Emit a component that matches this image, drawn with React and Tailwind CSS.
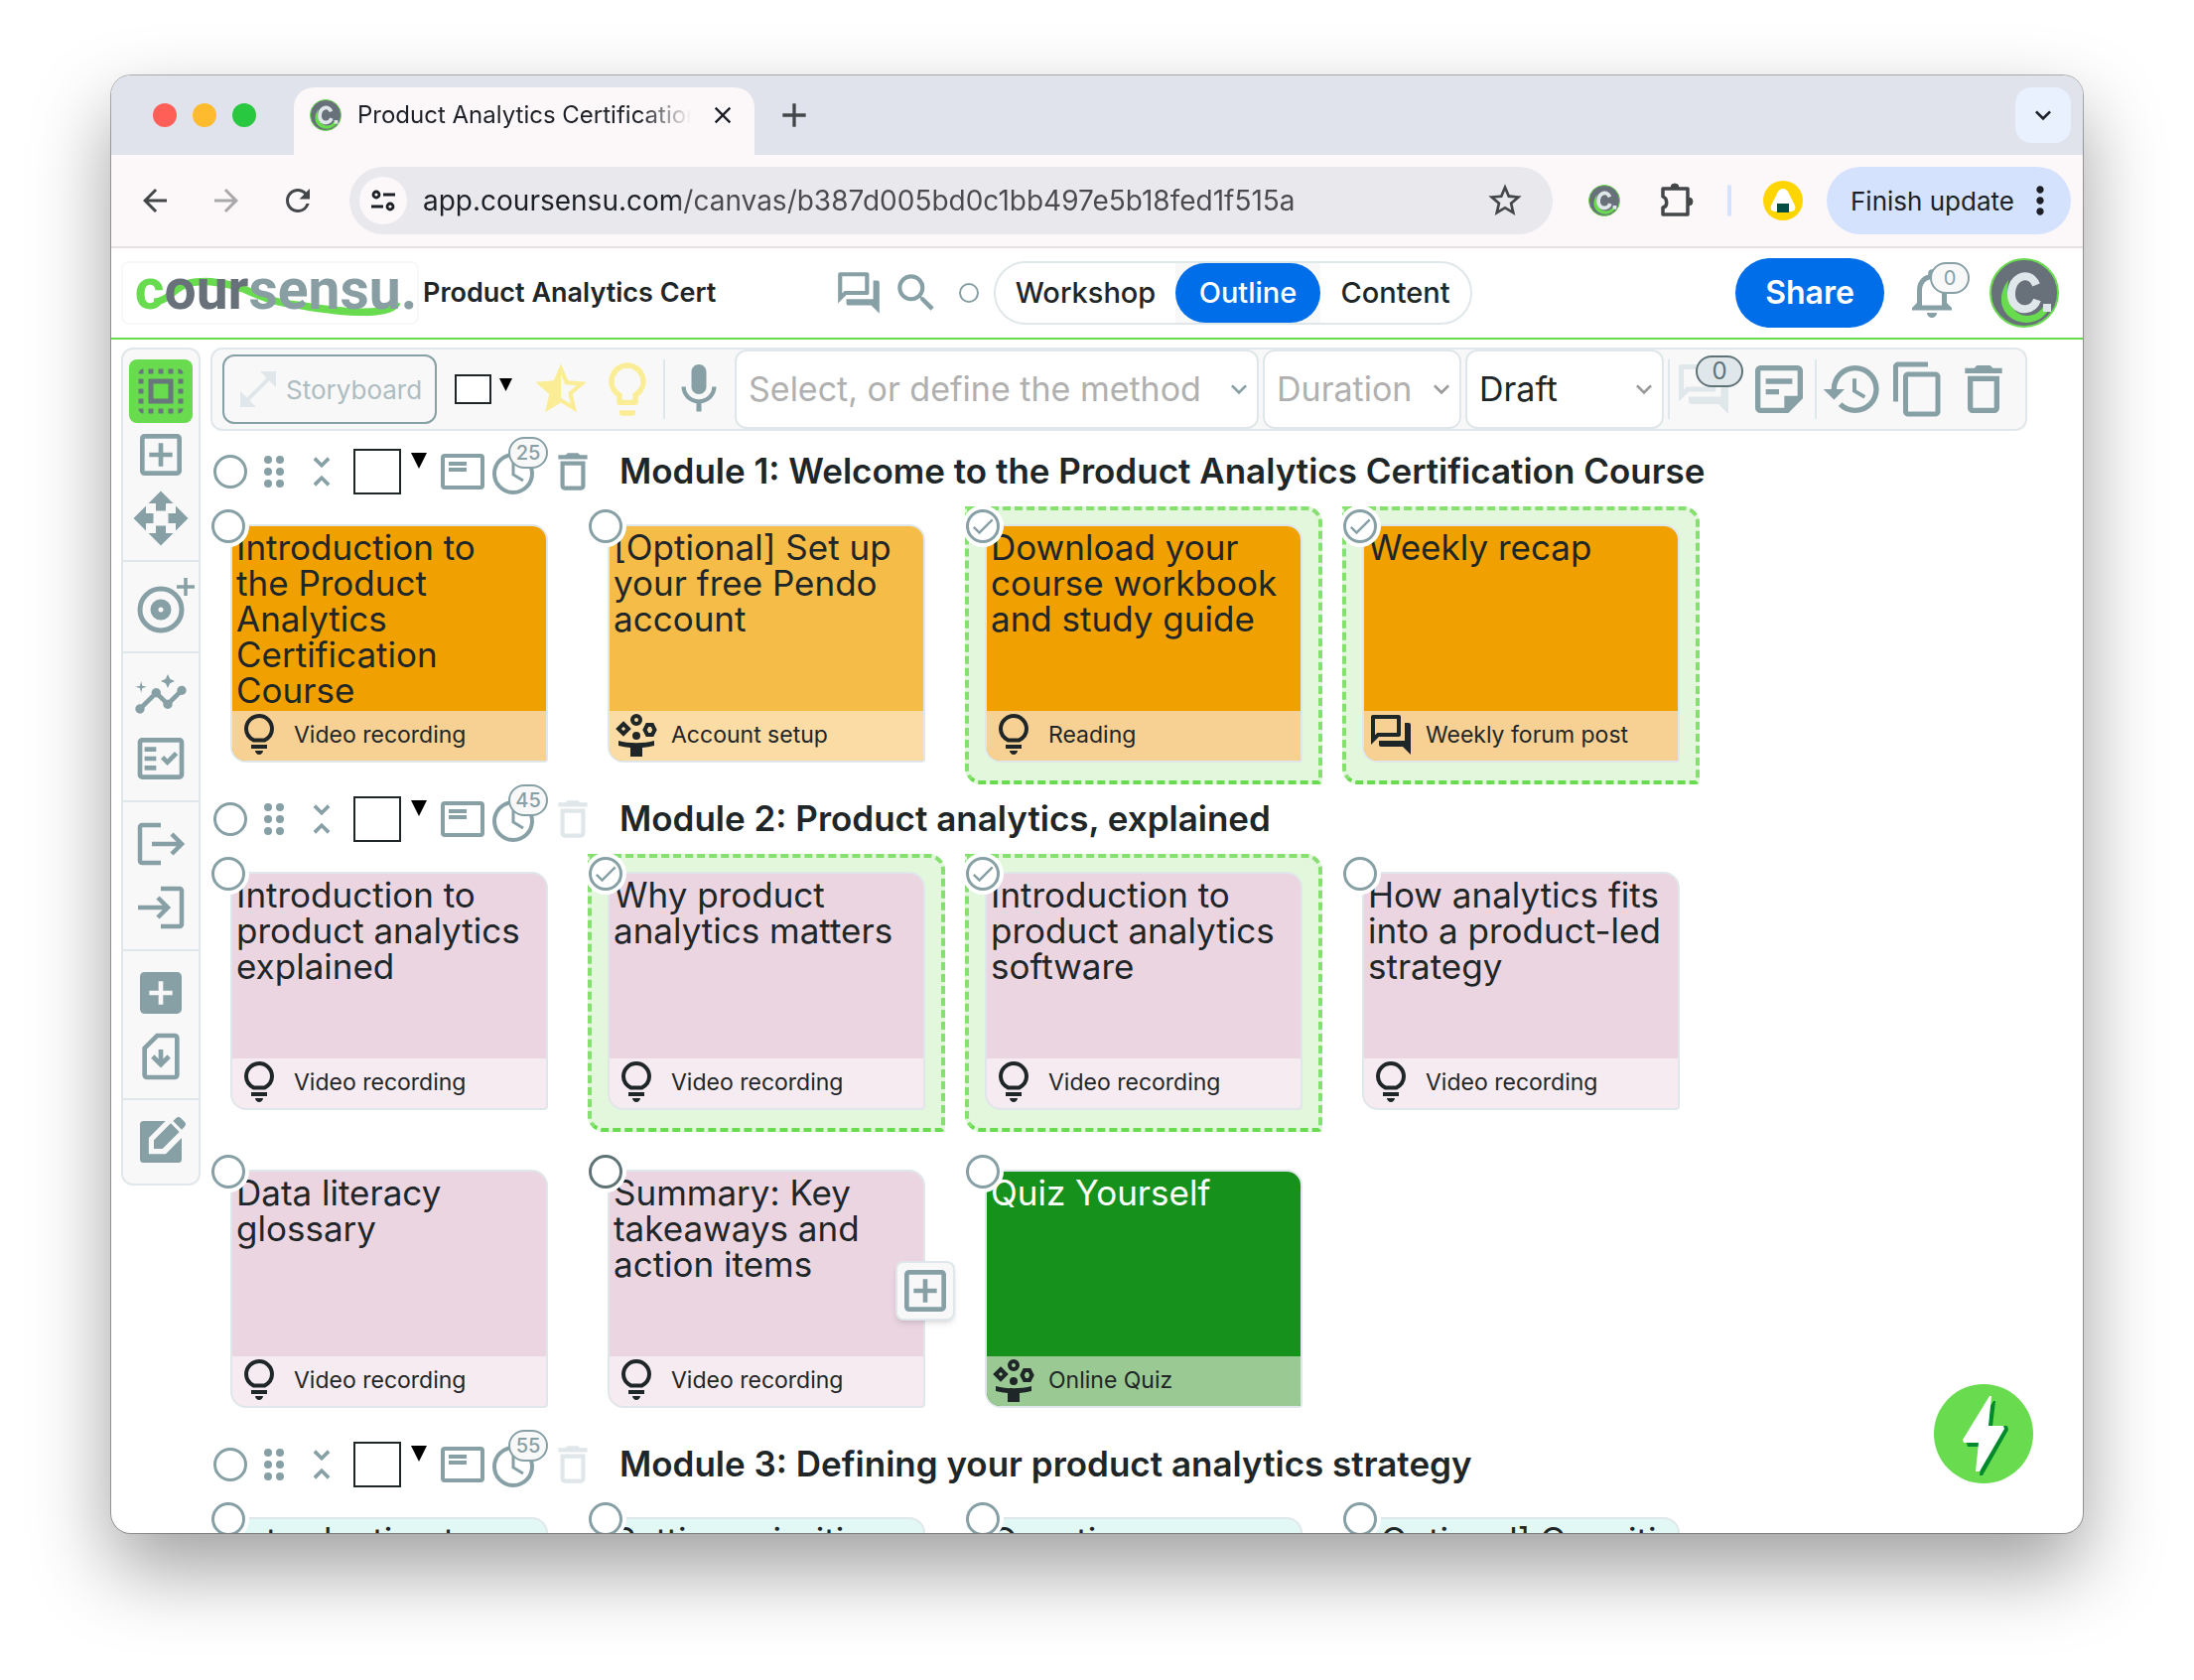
import React from 'react';
import {
    MdAddBox, MdArrowBack, MdArrowForward, MdClose, MdContentCopy, MdDeleteOutline, MdHistory,
    MdInsights, MdKeyboardArrowDown, MdLightbulbOutline, MdMic, MdMoreVert, MdOpenInFull, MdOpenWith,
    MdOutlineAddBox, MdOutlineFactCheck, MdOutlineForum, MdOutlineNotifications, MdRefresh, MdSearch,
    MdSelectAll, MdStarHalf, MdStarOutline, MdUnfoldLess, MdAdd, MdCheck,
} from 'react-icons/md';

const MODULES = [
    {
        id: 1,
        title: 'Module 1: Welcome to the Product Analytics Certification Course',
        minutes: 25,
        canDelete: true,
        cards: [
            { title: 'Introduction to the Product Analytics Certification Course', method: 'Video recording', icon: 'bulb', tone: 'orange' },
            { title: '[Optional] Set up your free Pendo account', method: 'Account setup', icon: 'juggle', tone: 'amber' },
            { title: 'Download your course workbook and study guide', method: 'Reading', icon: 'bulb', tone: 'orange', selected: true },
            { title: 'Weekly recap', method: 'Weekly forum post', icon: 'forum', tone: 'orange', selected: true },
        ],
    },
    {
        id: 2,
        title: 'Module 2: Product analytics, explained',
        minutes: 45,
        cards: [
            { title: 'Introduction to product analytics explained', method: 'Video recording', icon: 'bulb', tone: 'pink' },
            { title: 'Why product analytics matters', method: 'Video recording', icon: 'bulb', tone: 'pink', selected: true },
            { title: 'Introduction to product analytics software', method: 'Video recording', icon: 'bulb', tone: 'pink', selected: true },
            { title: 'How analytics fits into a product-led strategy', method: 'Video recording', icon: 'bulb', tone: 'pink' },
            { title: 'Data literacy glossary', method: 'Video recording', icon: 'bulb', tone: 'pink' },
            { title: 'Summary: Key takeaways and action items', method: 'Video recording', icon: 'bulb', tone: 'pink', active: true },
            { title: 'Quiz Yourself', method: 'Online Quiz', icon: 'juggle', tone: 'green' },
        ],
    },
    {
        id: 3,
        title: 'Module 3: Defining your product analytics strategy',
        minutes: 55,
        cards: [
            { title: 'Introduction to defining strategy', method: 'Video recording', icon: 'bulb', tone: 'mint' },
            { title: 'Setting priorities', method: 'Video recording', icon: 'bulb', tone: 'mint' },
            { title: 'Questions', method: 'Video recording', icon: 'bulb', tone: 'mint' },
            { title: '[Optional] Cogniti\u200bve', method: 'Reading', icon: 'bulb', tone: 'mint' },
        ],
    },
];

const TONES = {
    orange: 'bg-[#f0a100] text-[#1f2628]',
    amber: 'bg-[#f5bd47] text-[#1f2628]',
    pink: 'bg-[#ebd5e1] text-[#1f2628]',
    green: 'bg-[#16921c] text-white',
    mint: 'bg-[#e2f8f4] text-[#1f2628]',
};

const FOOTER_TONES = {
    orange: 'bg-[#f7d193]',
    amber: 'bg-[#fbdca4]',
    pink: 'bg-[#f6ebf0]',
    green: 'bg-[#9ac993]',
    mint: 'bg-[#f1fbf9]',
};

/* ---------- icons ---------- */

const BrandMark = ({ className }) => (
    <svg viewBox="0 0 70 70" className={className} aria-hidden="true">
        <circle cx="35" cy="35" r="34" fill="#68717a" stroke="#68db4f" strokeWidth="2" />
        <path d="M19 22C10 34 9 48 19 58C31 69 52 67 60 51L54 49C48 59 34 61 26 53C19 46 17 34 19 22Z" fill="#68db4f" />
        <path d="M47 27C43 17 35 17 30 20C21 25 20 40 25 46C31 54 44 53 48 42" fill="none" stroke="#e0e7ea" strokeWidth="8" />
        <rect x="54" y="46" width="8" height="8" fill="#e0e7ea" />
    </svg>
);

const BulbIcon = ({ className }) => (
    <svg viewBox="0 0 30 42" className={className} aria-hidden="true">
        <path d="M9.500 26.500C5 24 2 20 2 15a13 13 0 0 1 26 0c0 5-3 9-7.500 11.500Z" fill="none" stroke="currentColor" strokeWidth="4" strokeLinejoin="round" />
        <path d="M7 31h16v4H7zM11 37h8c0 2-2 4-4 4s-4-2-4-4Z" fill="currentColor" />
    </svg>
);

const JuggleIcon = ({ className }) => (
    <svg viewBox="0 0 42 44" className={className} aria-hidden="true">
        <g fill="none" stroke="currentColor" strokeWidth="4">
            <circle cx="21" cy="7" r="4" />
            <path d="M8 11l5 5-5 5-5-5z" />
            <path d="M32 12h5l2.500 5-2.500 5h-5l-2.500-5z" />
        </g>
        <circle cx="21" cy="23" r="4" fill="currentColor" />
        <path d="M3 28c10 3 26 3 36 0v5c-4 1-8 1.500-12 2v9H15v-9c-4-.5-8-1-12-2Z" fill="currentColor" />
    </svg>
);

const TargetPlusIcon = ({ className }) => (
    <svg viewBox="0 0 60 70" className={className} aria-hidden="true" fill="none" stroke="currentColor">
        <circle cx="28" cy="38" r="21" strokeWidth="5" />
        <circle cx="28" cy="38" r="6.500" strokeWidth="8" />
        <path d="M53 6v18M44 15h18" strokeWidth="3.500" />
    </svg>
);

const ExportIcon = ({ className }) => (
    <svg viewBox="0 0 56 56" className={className} aria-hidden="true" fill="none" stroke="currentColor" strokeWidth="4.500">
        <path d="M28 9H9a2 2 0 0 0-2 2v34a2 2 0 0 0 2 2h19M19 28h29M39 18l10 10-10 10" />
    </svg>
);

const ImportIcon = ({ className }) => (
    <svg viewBox="0 0 56 56" className={className} aria-hidden="true" fill="none" stroke="currentColor" strokeWidth="4.500">
        <path d="M28 9h19a2 2 0 0 1 2 2v34a2 2 0 0 1-2 2H28M5 28h29M25 18l10 10-10 10" />
    </svg>
);

const DownloadCardIcon = ({ className }) => (
    <svg viewBox="0 0 24 24" className={className} aria-hidden="true" fill="none" stroke="currentColor" strokeWidth="2">
        <path d="M10.400 3H18a1 1 0 0 1 1 1v16a1 1 0 0 1-1 1H6a1 1 0 0 1-1-1V8.400z" />
        <path d="M12 9v6M8.500 12l3.500 3.500 3.500-3.500" />
    </svg>
);

const EditSquareIcon = ({ className }) => (
    <svg viewBox="0 0 24 24" className={className} aria-hidden="true" fill="currentColor">
        <path d="M3 4.500A1.500 1.500 0 0 1 4.500 3H14l-7.200 7.300V17.200h7.300L21 10.300V19.500a1.500 1.500 0 0 1-1.500 1.500h-15A1.500 1.500 0 0 1 3 19.500Z" />
        <path d="M9 11.300 16.300 4l3.700 3.700-7.300 7.300H9ZM17.300 3l1.200-1.200c.7-.7 1.500-.7 2.200 0l1.500 1.500c.7.7.7 1.500 0 2.200L21 6.700Z" />
    </svg>
);

const NoteIcon = ({ className }) => (
    <svg viewBox="0 0 24 24" className={className} aria-hidden="true" fill="currentColor">
        <path fillRule="evenodd" d="M5 3h14a2 2 0 0 1 2 2v10.500L15.500 21H5a2 2 0 0 1-2-2V5a2 2 0 0 1 2-2Zm0 2v14h9v-4.500h5V5Z" />
        <path d="M7 8h10v2H7zM7 12h5v2H7z" />
    </svg>
);

const CardViewIcon = ({ className }) => (
    <svg viewBox="0 0 44 36" className={className} aria-hidden="true">
        <rect x="2" y="2" width="40" height="32" rx="2" fill="none" stroke="currentColor" strokeWidth="4" />
        <path d="M8 8h18v4H8zM8 14h18v4H8z" fill="currentColor" />
    </svg>
);

const ClockIcon = ({ className }) => (
    <svg viewBox="0 0 42 42" className={className} aria-hidden="true" fill="none" stroke="currentColor">
        <circle cx="21" cy="21" r="19" strokeWidth="4" />
        <path d="M21 10v12l10 6" strokeWidth="3" />
    </svg>
);

const DragIcon = ({ className }) => (
    <svg viewBox="0 0 20 32" className={className} aria-hidden="true" fill="currentColor">
        <circle cx="4" cy="4" r="4" /><circle cx="16" cy="4" r="4" />
        <circle cx="4" cy="16" r="4" /><circle cx="16" cy="16" r="4" />
        <circle cx="4" cy="28" r="4" /><circle cx="16" cy="28" r="4" />
    </svg>
);

const Triangle = ({ className }) => (
    <svg viewBox="0 0 16 16" className={className} aria-hidden="true">
        <path d="M0 0h16L8 16z" fill="#000" />
    </svg>
);

const PuzzleIcon = ({ className }) => (
    <svg viewBox="0 0 34 38" className={className} aria-hidden="true">
        <path d="M3 7h25v26H3v-7c5-1 5-9 0-11Z" fill="none" stroke="#444749" strokeWidth="3.500" strokeLinejoin="round" />
        <path d="M11 6a4 4 0 0 1 8 0zM29 16a4 4 0 0 1 0 8z" fill="#444749" stroke="#444749" />
    </svg>
);

const SiteInfoIcon = ({ className }) => (
    <svg viewBox="0 0 24 24" className={className} aria-hidden="true" fill="none" stroke="#1c1f26" strokeWidth="2.800">
        <circle cx="5" cy="6" r="3" /><path d="M12 6h12M0 18h12" /><circle cx="19" cy="18" r="3" />
    </svg>
);

const CARD_ICONS = {
    bulb: <BulbIcon className="h-[42px] w-[30px] shrink-0" />,
    juggle: <JuggleIcon className="h-11 w-[42px] shrink-0" />,
    forum: <MdOutlineForum className="size-12 shrink-0" />,
};

/* ---------- browser chrome ---------- */

const TabStrip = () => (
    <div className="flex h-20 shrink-0 items-end bg-[#e0e3ec] pr-3">
        <div className="flex h-20 w-[184px] items-center gap-4 pl-[42px]">
            <span className="size-6 rounded-full bg-[#ff5f57]" />
            <span className="size-6 rounded-full bg-[#febb2e]" />
            <span className="size-6 rounded-full bg-[#28c840]" />
        </div>
        <div className="flex h-[68px] w-[464px] items-center rounded-t-[20px] bg-[#fcf8f9] pr-4 pb-3 pl-4">
            <BrandMark className="size-8 shrink-0" />
            <span className="ml-4 w-[336px] overflow-hidden mask-r-from-85% text-2xl whitespace-nowrap text-[#1c1f26]">
                Product Analytics Certification
            </span>
            <button type="button" aria-label="Close tab" className="ml-[18px] shrink-0"><MdClose className="size-7 text-[#1c1f26]" /></button>
        </div>
        <button type="button" aria-label="New tab" className="mb-5 ml-5"><MdAdd className="size-10 text-[#444749]" /></button>
        <button type="button" aria-label="Search tabs" className="mb-3 ml-auto flex size-14 items-center justify-center rounded-2xl bg-[#e9f0fe]">
            <MdKeyboardArrowDown className="size-8 text-[#1c1f26]" />
        </button>
    </div>
);

const AddressBar = () => (
    <div className="flex h-[94px] shrink-0 items-center border-b-2 border-[#e5e0e2] bg-[#fcf8f9] pr-3 pl-6 text-[#444749]">
        <button type="button" aria-label="Back" className="w-10"><MdArrowBack className="mx-auto size-9" /></button>
        <button type="button" aria-label="Forward" className="ml-8 w-10 text-[#a9a9ab]"><MdArrowForward className="mx-auto size-9" /></button>
        <button type="button" aria-label="Reload" className="ml-8 w-10"><MdRefresh className="mx-auto size-9" /></button>
        <div className="ml-8 flex h-[68px] flex-1 items-center rounded-full bg-[#e9e8ed] pr-7 pl-[10px]">
            <button type="button" aria-label="Site information" className="flex size-12 items-center justify-center rounded-full bg-[#fcf8f9]">
                <SiteInfoIcon className="size-6" />
            </button>
            <input
                type="text"
                aria-label="Address"
                defaultValue="app.coursensu.com/canvas/b387d005bd0c1bb497e5b18fed1f515a"
                className="ml-4 flex-1 bg-linear-to-r from-[#1c1f26] from-[258px] to-[#4a4a4d] to-[258px] bg-clip-text text-[28px] text-transparent outline-none"
            />
            <button type="button" aria-label="Bookmark"><MdStarOutline className="size-10" /></button>
        </div>
        <BrandMark className="ml-9 size-8" />
        <button type="button" aria-label="Extensions" className="ml-10"><PuzzleIcon className="h-[38px] w-[34px]" /></button>
        <span className="ml-[34px] h-8 w-1 rounded-full bg-[#d5e2fd]" />
        <svg viewBox="0 0 40 40" className="ml-8 size-10" aria-hidden="true">
            <circle cx="20" cy="20" r="20" fill="#ffd500" />
            <path d="M20 8c3 0 5 2 7 7l5 10c1 3 0 6-4 6H12c-4 0-5-3-4-6l5-10c2-5 4-7 7-7Z" fill="#fff" />
            <path d="M14 23h12v9H14z" fill="#004d43" />
        </svg>
        <button type="button" className="ml-6 flex h-[68px] w-[246px] items-center rounded-full bg-[#d5e2fd] pl-6 text-[26px] text-[#1c1f26]">
            Finish update
            <MdMoreVert className="ml-1 size-11" />
        </button>
    </div>
);

/* ---------- app ---------- */

const Logo = () => (
    <a href="#home" className="relative flex h-16 w-[300px] items-center justify-center rounded-lg border-2 border-[#f8f8f8] pl-3">
        <svg viewBox="0 0 299 64" className="absolute inset-0 h-full w-full" aria-hidden="true">
            <path d="M25 42C50 38 42 18 86 20C130 24 132 40 180 45C226 53 280 58 286 42" fill="none" stroke="#68db4f" strokeWidth="8" />
        </svg>
        <span className="relative pb-2 font-['Roboto'] text-[57px] leading-none font-bold text-[#889ea3]">
            <span className="text-[#68db4f]">c</span><span className="text-[#68717a]">our</span>sensu.
        </span>
    </a>
);

const AppHeader = () => (
    <header className="flex h-[92px] shrink-0 items-center border-b-2 border-[#68db4f] bg-white pr-6 pl-[10px]">
        <Logo />
        <h1 className="ml-1 w-[414px] text-[27px] font-semibold">Product Analytics Cert</h1>
        <button type="button" aria-label="Comments"><MdOutlineForum className="size-[50px] text-[#87a0a5]" /></button>
        <button type="button" aria-label="Search" className="ml-2"><MdSearch className="size-[50px] text-[#87a0a5]" /></button>
        <input type="radio" aria-label="Focus mode" className="ml-[18px] size-5 appearance-none rounded-full border-2 border-[#87a0a5]" />
        <nav className="ml-[15px] flex h-16 items-stretch rounded-full border-2 border-[#e0e7ea] text-[29px] font-medium">
            <button type="button" className="w-[181px]">Workshop</button>
            <span className="flex bg-[#f8f8f8]">
                <button type="button" className="w-[146px] rounded-full bg-[#006ee9] text-white">Outline</button>
            </span>
            <button type="button" className="w-[151px]">Content</button>
        </nav>
        <button type="button" className="ml-auto h-[70px] w-[150px] rounded-full bg-[#006ee9] text-[32px] font-semibold text-white">Share</button>
        <button type="button" aria-label="Notifications" className="relative mr-7 ml-[18px]">
            <MdOutlineNotifications className="size-[60px] text-[#87a0a5]" />
            <span className="absolute -top-px -right-[8px] flex h-8 w-10 items-center justify-center rounded-full border-2 border-[#87a0a5] bg-[#f8f8f8] text-[20px] text-[#87a0a5]">0</span>
        </button>
        <BrandMark className="size-[70px]" />
    </header>
);

const SideButton = ({ label, children }) => (
    <button type="button" aria-label={label} className="flex h-16 w-full items-center justify-center">{children}</button>
);

const SideBar = () => (
    <aside className="flex w-20 shrink-0 flex-col self-start rounded-xl border-2 border-[#e0e7ea] bg-[#f8f8f8] text-[#87a0a5]">
        <div className="py-[10px]">
            <button type="button" aria-label="Select cards" className="mx-auto flex size-16 items-center justify-center rounded-lg bg-[#68db4f] text-[#68777b]">
                <MdSelectAll className="size-[60px]" />
            </button>
            <SideButton label="Add card"><MdOutlineAddBox className="size-14" /></SideButton>
            <SideButton label="Move"><MdOpenWith className="size-[60px]" /></SideButton>
        </div>
        <div className="border-t-2 border-[#e0e7ea] py-[10px]">
            <button type="button" aria-label="Add outcome" className="flex w-full justify-center pl-1">
                <TargetPlusIcon className="h-[70px] w-[60px] overflow-visible" />
            </button>
        </div>
        <div className="border-t-2 border-[#e0e7ea] py-[10px]">
            <SideButton label="Insights"><MdInsights className="size-14" /></SideButton>
            <SideButton label="Checklist"><MdOutlineFactCheck className="size-14" /></SideButton>
        </div>
        <div className="border-t-2 border-[#e0e7ea] py-[10px]">
            <SideButton label="Export"><ExportIcon className="size-14" /></SideButton>
            <SideButton label="Import"><ImportIcon className="size-14" /></SideButton>
        </div>
        <div className="border-t-2 border-[#e0e7ea] py-[10px]">
            <SideButton label="Add module"><MdAddBox className="size-14" /></SideButton>
            <SideButton label="Download"><DownloadCardIcon className="size-14" /></SideButton>
        </div>
        <div className="border-t-2 border-[#e0e7ea] py-[10px]">
            <SideButton label="Edit"><EditSquareIcon className="size-14" /></SideButton>
        </div>
    </aside>
);

const SelectBox = ({ label, value, className, chevron }) => (
    <div className={`relative ${className}`}>
        <select aria-label={label} defaultValue={value} className="h-20 w-full appearance-none rounded-xl border-2 border-[#e0e7ea] bg-white pb-[2px] pl-3 outline-none">
            <option>{value}</option>
        </select>
        <MdKeyboardArrowDown className={`pointer-events-none absolute top-6 right-1 size-8 ${chevron}`} />
    </div>
);

const Toolbar = () => (
    <div className="mr-14 flex h-[84px] items-center rounded-xl border-2 border-[#e0e7ea] bg-[#f8f8f8] pl-[10px] text-[#87a0a5]">
        <button type="button" disabled className="flex h-[70px] w-[216px] items-center rounded-xl border-2 border-[#87a0a5] pl-[10px] text-[26px] text-[#adbdc1]">
            <MdOpenInFull className="mr-1 size-12 text-[#e0e7ea]" />
            Storyboard
        </button>
        <button type="button" aria-label="Card colour" className="ml-[18px] flex items-start gap-2">
            <span className="h-[30px] w-[37px] border-2 border-[#1f2628] bg-white" />
            <Triangle className="mt-1 size-[13px]" />
        </button>
        <button type="button" aria-label="Rate" className="ml-[18px]"><MdStarHalf className="size-[62px] text-[#fbed96]" /></button>
        <button type="button" aria-label="Idea" className="ml-1"><MdLightbulbOutline className="size-16 text-[#fbed96]" /></button>
        <span className="ml-1 h-[60px] w-[2px] bg-[#e0e7ea]" />
        <button type="button" aria-label="Dictate" className="ml-1"><MdMic className="size-[60px]" /></button>
        <SelectBox label="Method" value="Select, or define the method" className="ml-[6px] w-[528px] text-[34px] text-[#b0b0b0]" chevron="text-[#87a0a5]" />
        <SelectBox label="Duration" value="Duration" className="ml-1 w-[200px] text-[34px] text-[#b0b0b0]" chevron="text-[#999]" />
        <SelectBox label="Status" value="Draft" className="ml-1 w-[200px] text-[34px] text-[#1f2628]" chevron="text-[#999]" />
        <span className="ml-1 h-[60px] w-[2px] bg-[#e0e7ea]" />
        <button type="button" aria-label="Card comments" className="relative ml-1">
            <MdOutlineForum className="size-[60px] text-[#e0e7ea]" />
            <span className="absolute -top-1 -right-[10px] flex h-8 w-12 items-center justify-center rounded-full border-2 border-[#5f7377] bg-[#e0e7ea] text-[24px] text-[#5f7377]">0</span>
        </button>
        <button type="button" aria-label="Notes" className="ml-[14px]"><NoteIcon className="size-16" /></button>
        <span className="ml-1 h-[60px] w-[2px] bg-[#e0e7ea]" />
        <button type="button" aria-label="History" className="ml-1"><MdHistory className="size-16" /></button>
        <button type="button" aria-label="Copy" className="ml-1"><MdContentCopy className="size-[60px]" /></button>
        <button type="button" aria-label="Delete" className="ml-1"><MdDeleteOutline className="size-16" /></button>
    </div>
);

const ModuleHeader = ({ module }) => (
    <div className="flex h-[50px] items-center pl-[3px] text-[#87a0a5]">
        <input type="checkbox" aria-label={`Select ${module.title}`} className="size-[34px] shrink-0 appearance-none rounded-full border-[3px] border-[#87a0a5]" />
        <button type="button" aria-label="Drag module" className="ml-[17px]"><DragIcon className="h-8 w-5" /></button>
        <button type="button" aria-label="Collapse" className="ml-4"><MdUnfoldLess className="size-11" /></button>
        <button type="button" aria-label="Module colour" className="ml-[10px] flex items-start gap-[10px]">
            <span className="h-[46px] w-12 border-2 border-[#1f2628] bg-white" />
            <Triangle className="mt-1 size-4" />
        </button>
        <button type="button" aria-label="Card view" className="ml-[14px]"><CardViewIcon className="h-9 w-11" /></button>
        <button type="button" aria-label="Duration" className="relative ml-2 pt-1">
            <ClockIcon className="size-[42px]" />
            <span className="absolute -top-3 -right-[14px] flex h-8 w-10 items-center justify-center rounded-full border-2 border-[#87a0a5] bg-[#f8f8f8] text-[20px] font-medium">
                {module.minutes}
            </span>
        </button>
        <button type="button" aria-label="Delete module" disabled={!module.canDelete} className="ml-[14px] disabled:text-[#e0e7ea]">
            <MdDeleteOutline className="size-[50px]" />
        </button>
        <h2 className="ml-[22px] pb-[2px] text-[35px] leading-none font-semibold whitespace-nowrap text-[#1f2628]">{module.title}</h2>
    </div>
);

const Card = ({ card }) => {
    const frame = card.selected
        ? 'border-dashed border-[#85e070] border-b-[#68db4f] bg-[#e3f7dd]'
        : 'border-transparent';

    return (
        <article className={`relative h-[280px] rounded-tr-2xl rounded-br-sm rounded-bl-2xl border-4 px-4 pt-[14px] ${frame}`}>
            <div className={`flex h-60 flex-col overflow-hidden rounded-tr-2xl rounded-br-sm rounded-bl-2xl border-2 border-[#e0e7ea] ${TONES[card.tone]}`}>
                <h3 className="flex-1 pt-[3px] pr-[14px] pl-1 text-[35px] leading-9">{card.title}</h3>
                <div className={`flex h-[50px] shrink-0 items-center pb-[2px] text-[23px] text-[#1f2628] ${FOOTER_TONES[card.tone]}`}>
                    <span className="mr-2 flex w-[54px] shrink-0 justify-center">{CARD_ICONS[card.icon]}</span>
                    {card.method}
                </div>
            </div>
            <input
                type="checkbox"
                aria-label={card.title}
                defaultChecked={card.selected}
                className={`absolute -top-px -left-[3px] size-[34px] appearance-none rounded-full border-[3px] bg-white ring-4 ring-white ${card.active ? 'border-[#5f7377]' : 'border-[#87a0a5]'}`}
            />
            {card.selected && <MdCheck className="pointer-events-none absolute top-[2px] left-0 size-7 text-[#87a0a5]" />}
            {card.active && (
                <button type="button" aria-label="Add card after" className="absolute top-[106px] -right-[14px] z-10 flex size-[60px] items-center justify-center rounded-lg border-2 border-[#e0e7ea] bg-[#f8f8f8] text-[#87a0a5] shadow-md">
                    <MdOutlineAddBox className="size-14 shrink-0" />
                </button>
            )}
        </article>
    );
};

const Module = ({ module }) => (
    <section>
        <ModuleHeader module={module} />
        <div className="grid grid-cols-[repeat(4,360px)] gap-5 py-[10px]">
            {module.cards.map((card) => <Card key={card.title} card={card} />)}
        </div>
    </section>
);

export default function App() {
    return (
        <div className="flex h-screen flex-col bg-white px-28 pt-19 pb-37 font-['Inter',sans-serif] text-[#1f2628]">
            <div className="relative flex min-h-0 flex-1 flex-col overflow-hidden rounded-[20px] bg-white shadow-[0_0_0_1px_rgba(0,0,0,0.3),0_36px_80px_rgba(0,0,0,0.38)]">
                <TabStrip />
                <AddressBar />
                <AppHeader />
                <div className="flex min-h-0 flex-1 overflow-hidden pt-2 pl-[10px]">
                    <SideBar />
                    <main className="ml-[10px] min-w-0 flex-1">
                        <Toolbar />
                        <div className="pt-4">
                            {MODULES.map((module) => <Module key={module.id} module={module} />)}
                        </div>
                    </main>
                </div>
                <button type="button" aria-label="Quick actions" className="absolute right-[50px] bottom-[50px] size-[100px] rounded-full bg-[#68db4f]">
                    <svg viewBox="0 0 100 100" className="size-full" aria-hidden="true">
                        <path d="M60 17h2l-3 25h15l1 4-26 46h-3l3-29H34l-1-4z" fill="#008a2b" />
                        <path d="M56 12h2l-3 30h15l1 3-25 43h-4l3-29H30l-1-3z" fill="#fff" />
                    </svg>
                </button>
            </div>
        </div>
    );
}
